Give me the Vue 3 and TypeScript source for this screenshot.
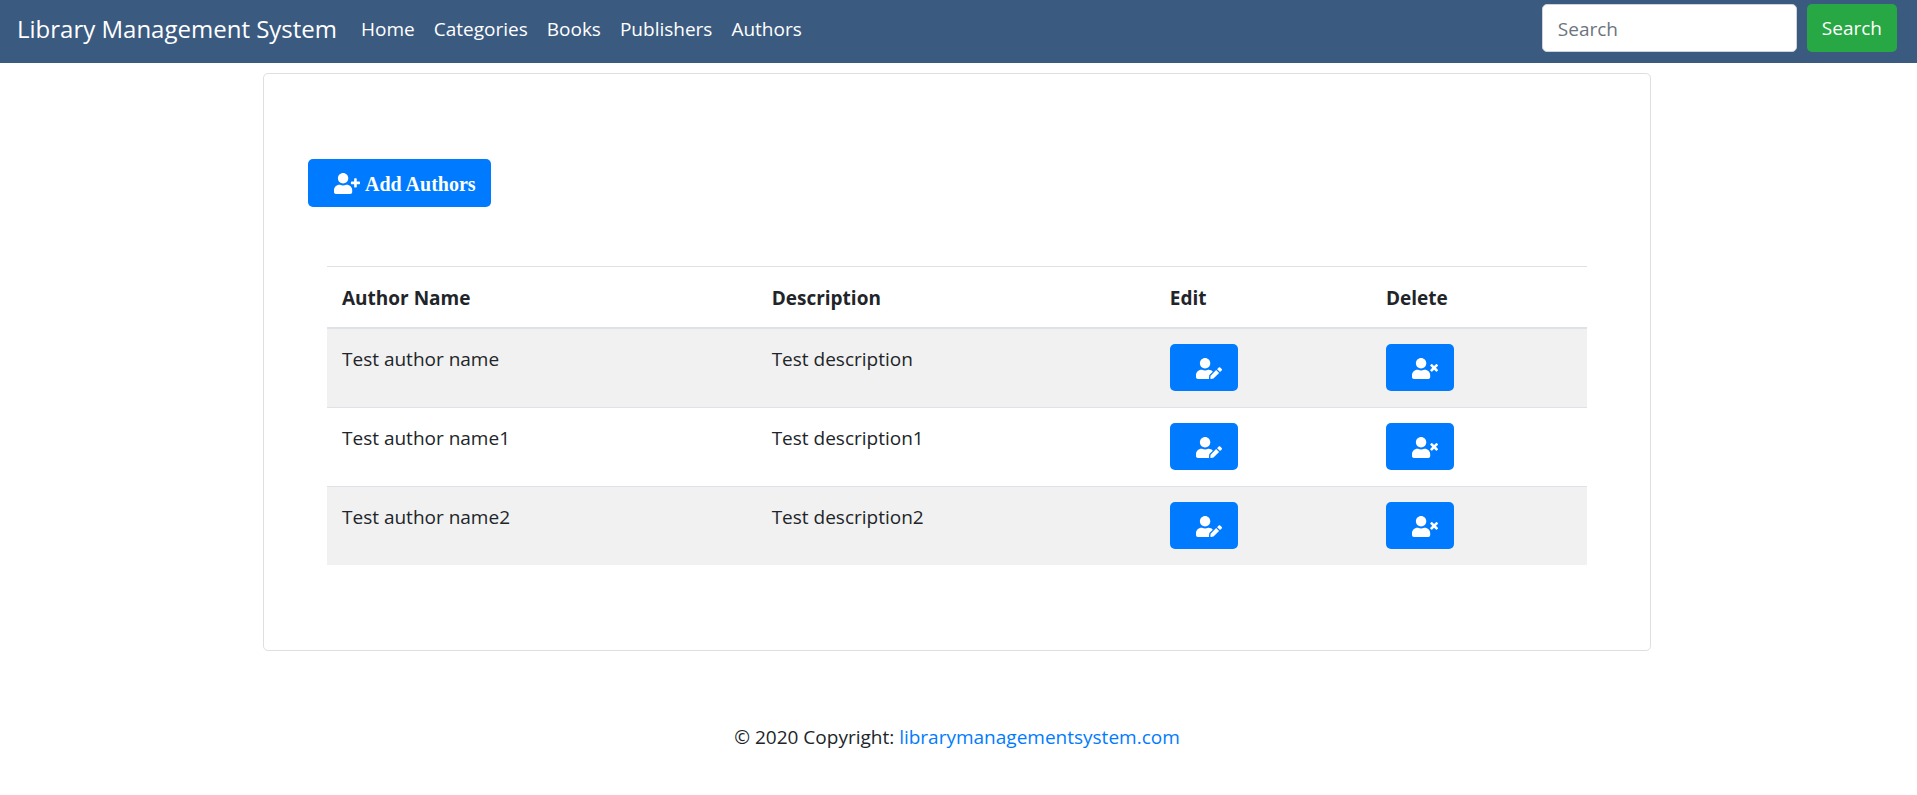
<script setup lang="ts">
interface Author {
  name: string
  description: string
}

const links: string[] = ['Home', 'Categories', 'Books', 'Publishers', 'Authors']

const authors: Author[] = [
  { name: 'Test author name', description: 'Test description' },
  { name: 'Test author name1', description: 'Test description1' },
  { name: 'Test author name2', description: 'Test description2' },
]

const personPath =
  'M224 256c70.7 0 128-57.3 128-128S294.7 0 224 0 96 57.3 96 128s57.3 128 128 128zm89.6 32h-16.7c-22.2 10.2-46.9 16-72.9 16s-50.6-5.8-72.9-16h-16.7C60.2 288 0 348.2 0 422.4V464c0 26.5 21.5 48 48 48h352c26.5 0 48-21.5 48-48v-41.6c0-74.2-60.2-134.4-134.4-134.4z'
const plusPath =
  'M624 208h-64v-64c0-8.8-7.2-16-16-16h-32c-8.8 0-16 7.2-16 16v64h-64c-8.8 0-16 7.2-16 16v32c0 8.8 7.2 16 16 16h64v64c0 8.8 7.2 16 16 16h32c8.8 0 16-7.2 16-16v-64h64c8.8 0 16-7.2 16-16v-32c0-8.8-7.2-16-16-16z'
const crossPath =
  'M589.6 240l45.6-45.6c6.3-6.3 6.3-16.5 0-22.8l-22.8-22.8c-6.3-6.3-16.5-6.3-22.8 0L544 194.4l-45.6-45.6c-6.3-6.3-16.5-6.3-22.8 0l-22.8 22.8c-6.3 6.3-6.3 16.5 0 22.8l45.6 45.6-45.6 45.6c-6.3 6.3-6.3 16.5 0 22.8l22.8 22.8c6.3 6.3 16.5 6.3 22.8 0l45.6-45.6 45.6 45.6c6.3 6.3 16.5 6.3 22.8 0l22.8-22.8c6.3-6.3 6.3-16.5 0-22.8L589.6 240z'
const editPath =
  'M224 256c70.7 0 128-57.3 128-128S294.7 0 224 0 96 57.3 96 128s57.3 128 128 128zm89.6 32h-16.7c-22.2 10.2-46.9 16-72.9 16s-50.6-5.8-72.9-16h-16.7C60.2 288 0 348.2 0 422.4V464c0 26.5 21.5 48 48 48h274.9c-2.4-6.8-3.4-14-2.6-21.3l6.8-60.9 1.2-11.1 7.9-7.9 77.3-77.3c-24.5-27.7-60-45.5-99.9-45.5zm45.3 145.3l-6.8 61c-1.1 10.2 7.5 18.8 17.6 17.6l60.9-6.8 137.9-137.9-71.7-71.7-137.9 137.8zM633 268.9L595.1 231c-9.3-9.3-24.5-9.3-33.8 0l-37.8 37.8-4.1 4.1 71.8 71.7 41.8-41.8c9.3-9.4 9.3-24.5 0-33.9z'
</script>

<template>
  <div class="page">
    <nav class="navbar">
      <a class="brand" href="#">Library Management System</a>
      <ul class="nav-links">
        <li v-for="link in links" :key="link"><a href="#">{{ link }}</a></li>
      </ul>
      <form class="search" @submit.prevent>
        <input type="search" placeholder="Search" aria-label="Search" />
        <button type="submit" class="btn btn-success">Search</button>
      </form>
    </nav>

    <main class="container">
      <section class="card">
        <button type="button" class="btn btn-primary btn-add">
          <svg class="icon" viewBox="0 0 640 512" aria-hidden="true">
            <path :d="personPath" />
            <path :d="plusPath" />
          </svg>
          <span>Add Authors</span>
        </button>

        <table class="table">
          <colgroup>
            <col class="col-name" />
            <col class="col-description" />
            <col class="col-action" />
            <col class="col-action" />
          </colgroup>
          <thead>
            <tr>
              <th scope="col">Author Name</th>
              <th scope="col">Description</th>
              <th scope="col">Edit</th>
              <th scope="col">Delete</th>
            </tr>
          </thead>
          <tbody>
            <tr v-for="author in authors" :key="author.name">
              <td>{{ author.name }}</td>
              <td>{{ author.description }}</td>
              <td>
                <button type="button" class="btn btn-primary btn-icon" :aria-label="`Edit ${author.name}`">
                  <svg class="icon" viewBox="0 0 640 512" aria-hidden="true">
                    <path :d="editPath" />
                  </svg>
                </button>
              </td>
              <td>
                <button type="button" class="btn btn-primary btn-icon" :aria-label="`Delete ${author.name}`">
                  <svg class="icon" viewBox="0 0 640 512" aria-hidden="true">
                    <path :d="personPath" />
                    <path :d="crossPath" />
                  </svg>
                </button>
              </td>
            </tr>
          </tbody>
        </table>
      </section>
    </main>

    <footer class="footer">
      © 2020 Copyright: <a href="#">librarymanagementsystem.com</a>
    </footer>
  </div>
</template>

<style>
body {
  margin: 0;
  background: #fff;
}
</style>

<style scoped>
.page,
.page * {
  box-sizing: border-box;
}

.page {
  color: #212529;
  font-family: 'Segoe UI', 'Open Sans', 'Noto Sans', sans-serif;
  font-size: 19px;
  line-height: 30px;
}

a {
  text-decoration: none;
}

.navbar {
  display: flex;
  align-items: center;
  padding: 4px 20px 11px 17px;
  background: #3b5a80;
}

.brand {
  margin-right: 24px;
  padding-top: 2px;
  color: #fff;
  font-size: 24px;
}

.nav-links {
  display: flex;
  gap: 19px;
  margin: 0;
  padding: 2px 0 0;
  list-style: none;
}

.nav-links a {
  color: #fff;
}

.search {
  display: flex;
  gap: 10px;
  margin-left: auto;
}

.search input {
  width: 255px;
  height: 48px;
  padding: 2px 15px 0;
  border: 1px solid #ced4da;
  border-radius: 5px;
  background: #fff;
  color: #495057;
  font: inherit;
  appearance: none;
}

.search input::placeholder {
  color: #6c757d;
  opacity: 1;
}

.btn {
  display: flex;
  align-items: center;
  height: 48px;
  padding: 0 15px;
  border: 0;
  border-radius: 5px;
  color: #fff;
  font: inherit;
  cursor: pointer;
}

.btn-success {
  background: #28a745;
}

.btn-primary {
  background: #007bff;
}

.btn-add {
  gap: 5px;
  margin-left: -19px;
  padding-left: 26px;
  font-family: 'Liberation Serif', 'Times New Roman', serif;
  font-size: 20px;
  font-weight: 700;
}

.btn-add span {
  padding-top: 2px;
}

.btn-icon {
  height: 47px;
  padding: 2px 16px 0 26px;
}

.icon {
  display: block;
  width: 26px;
  height: 21px;
  fill: currentColor;
}

.container {
  padding: 10px 3px 0 0;
}

.card {
  max-width: 1388px;
  margin: 0 auto;
  padding: 85px 63px;
  border: 1px solid #dfdfdf;
  border-radius: 5px;
}

.table {
  width: 100%;
  margin-top: 59px;
  border-spacing: 0;
  table-layout: fixed;
}

.col-name {
  width: 34.1%;
}

.col-description {
  width: 31.6%;
}

.table th,
.table td {
  padding: 15px 15px 16px;
  text-align: left;
  vertical-align: top;
}

.table th {
  padding: 16px 15px 14px;
  border-top: 1px solid #dee2e6;
  border-bottom: 2px solid #dee2e6;
  font-weight: 700;
}

.table tbody tr + tr td {
  border-top: 1px solid #dee2e6;
}

.table tbody tr:nth-child(odd) {
  background: #f1f1f1;
}

.footer {
  padding: 71px 3px 40px 0;
  text-align: center;
}

.footer a {
  color: #007bff;
}
</style>
